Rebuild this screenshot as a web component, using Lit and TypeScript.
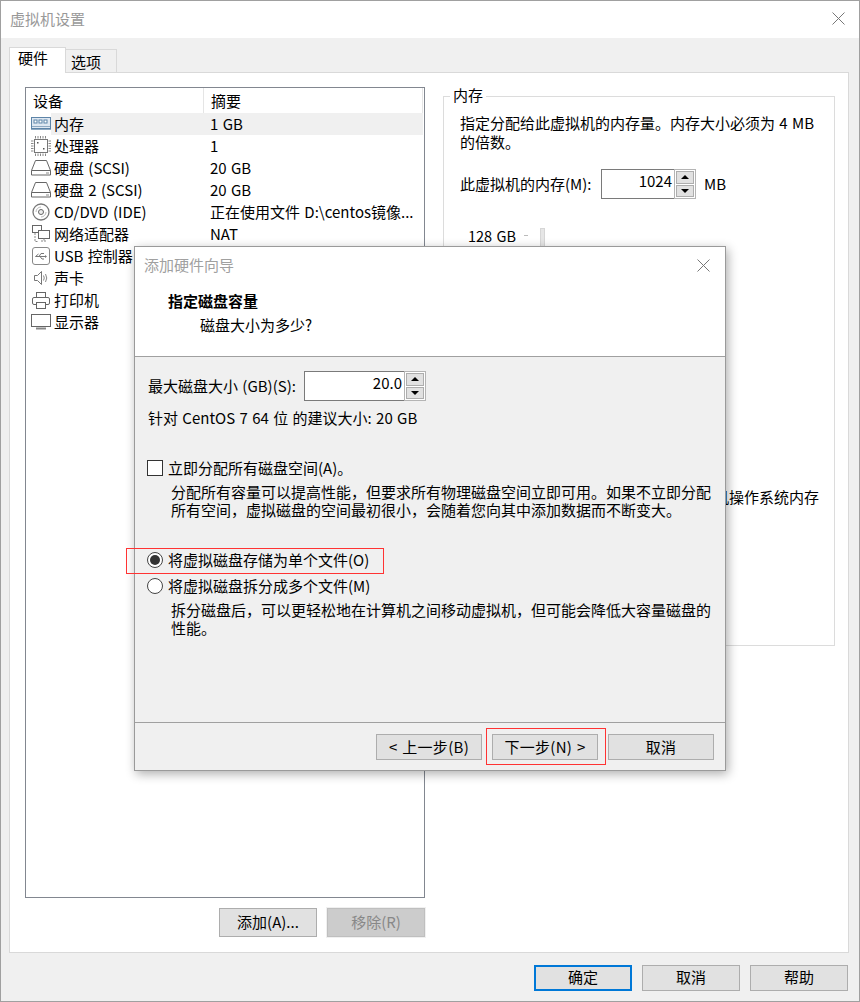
import { LitElement, html, css } from "lit";
import { customElement } from "lit/decorators.js";

const FONT = css`"Noto Sans CJK SC", "Noto Sans", sans-serif`;

const ic = {
  mem: html`<svg width="20" height="14" viewBox="0 0 20 14"><rect x=".5" y=".5" width="19" height="11" fill="#dfe8f2" stroke="#5d84a8"/><rect x="3" y="3" width="3" height="3" fill="#fff" stroke="#5d84a8"/><rect x="8" y="3" width="3" height="3" fill="#fff" stroke="#5d84a8"/><rect x="13" y="3" width="3" height="3" fill="#fff" stroke="#5d84a8"/><path d="M1 9.500h18M0 12.500h20" stroke="#8fa9c2"/></svg>`,
  cpu: html`<svg width="20" height="20" viewBox="0 0 20 20"><rect x="3.500" y="3.500" width="13" height="13" fill="#fff" stroke="#777"/><path d="M4.500 0v2.500M7 0v2.500M9.500 0v2.500M12 0v2.500M14.500 0v2.500M4.500 17.500v2.500M7 17.500v2.500M9.500 17.500v2.500M12 17.500v2.500M14.500 17.500v2.500M0 5h2.500M0 7.500h2.500M0 10h2.500M0 12.500h2.500M0 15h2.500M17.500 5h2.500M17.500 7.500h2.500M17.500 10h2.500M17.500 12.500h2.500M17.500 15h2.500" stroke="#888"/><rect x="6" y="6" width="1.500" height="1.500" fill="#555"/><rect x="12" y="12" width="1.500" height="1.500" fill="#555"/></svg>`,
  hdd: html`<svg width="20" height="16" viewBox="0 0 20 16"><path d="M4.500.5h11l4 10v4.500h-19v-4.500z" fill="#fff" stroke="#666"/><path d="M.5 10.500h19" stroke="#666"/><path d="M15 13h3" stroke="#888"/></svg>`,
  cd: html`<svg width="18" height="18" viewBox="0 0 18 18"><circle cx="9" cy="9" r="8" fill="#fff" stroke="#777" stroke-width="1.300"/><circle cx="9" cy="9" r="2.500" fill="#eee" stroke="#666"/><path d="M4 9a5 5 0 0 1 5-5M14 9a5 5 0 0 1-5 5" fill="none" stroke="#bbb"/></svg>`,
  net: html`<svg width="18" height="18" viewBox="0 0 18 18"><rect x=".5" y=".5" width="9" height="7" fill="#fff" stroke="#666"/><rect x="6.500" y="5.500" width="11" height="8" fill="#fff" stroke="#666"/><path d="M12 13.500v2M9 16h6M3 8v8.500h3" stroke="#888" fill="none" stroke-dasharray="2 1"/></svg>`,
  usb: html`<svg width="18" height="18" viewBox="0 0 18 18"><rect x=".5" y=".5" width="17" height="17" rx="2.500" fill="#fff" stroke="#888"/><path d="M3.500 9.500h10M3.500 9.500l3-2.500M7 9.500l2-3h3M8 9.500l2 2.500h2" fill="none" stroke="#777"/><path d="M13 8v3l2-1.500z" fill="#777"/></svg>`,
  snd: html`<svg width="16" height="16" viewBox="0 0 16 16"><path d="M1.500 5.500h3l4-4v13l-4-4h-3z" fill="#fff" stroke="#777"/><path d="M10.500 5.500q1.500 2.500 0 5M12.500 4q2.500 4 0 8" fill="none" stroke="#888"/></svg>`,
  prn: html`<svg width="18" height="17" viewBox="0 0 18 17"><rect x="4.500" y=".5" width="9" height="5" fill="#fff" stroke="#666"/><rect x=".5" y="5.500" width="17" height="7" rx="1.500" fill="#fff" stroke="#666"/><rect x="4.500" y="10.500" width="9" height="6" fill="#fff" stroke="#666"/></svg>`,
  mon: html`<svg width="20" height="16" viewBox="0 0 20 16"><rect x=".5" y=".5" width="19" height="12" fill="#fff" stroke="#666"/><path d="M5 14.500h10" stroke="#888" stroke-width="2"/></svg>`,
};

const devices = [
  [ic.mem, "内存", "1 GB"],
  [ic.cpu, "处理器", "1"],
  [ic.hdd, "硬盘 (SCSI)", "20 GB"],
  [ic.hdd, "硬盘 2 (SCSI)", "20 GB"],
  [ic.cd, "CD/DVD (IDE)", "正在使用文件 D:\\centos镜像..."],
  [ic.net, "网络适配器", "NAT"],
  [ic.usb, "USB 控制器", ""],
  [ic.snd, "声卡", ""],
  [ic.prn, "打印机", ""],
  [ic.mon, "显示器", ""],
] as const;

const closeX = html`<svg width="13" height="13" viewBox="0 0 13 13"><path d="M.5.5l12 12M12.500.5l-12 12" stroke="#777" fill="none"/></svg>`;

const spin = html`<span class="spin"><span class="up"></span><span class="dn"></span></span>`;

@customElement("app-root")
export class AppRoot extends LitElement {
  static styles = css`
    :host { display: block; width: 860px; height: 1002px; font-family: ${FONT}; font-size: 15px; word-spacing: 1px; color: #000; }
    * { box-sizing: border-box; }
    .win { position: relative; width: 860px; height: 1002px; background: #f0f0f0; border: 1px solid #a0a0a0; display: flex; flex-direction: column; overflow: hidden; }
    .tb { height: 37px; flex: none; background: #fff; display: flex; align-items: center; justify-content: space-between; padding: 0 14px 2px 9px; color: #999; }
    .tabs { height: 34px; flex: none; margin-left: 8px; display: flex; align-items: flex-end; }
    .tab { height: 23px; width: 51px; background: #f0f0f0; border: 1px solid #d9d9d9; border-left: 0; border-bottom: 0; padding-left: 5px; line-height: 24px; }
    .tab.on { height: 26px; width: 57px; background: #fff; border: 1px solid #d9d9d9; border-bottom: 0; padding-left: 8px; line-height: 20px; margin-bottom: -1px; position: relative; z-index: 1; }
    .pane { width: 840px; height: 881px; margin-left: 8px; background: #fff; border: 1px solid #d9d9d9; flex: none; display: grid; grid-template-columns: 400px 392px; column-gap: 18px; padding: 14px 0 0 15px; }
    .left { display: flex; flex-direction: column; }
    .list { height: 811px; border: 1px solid #828790; padding-right: 1px; display: flex; flex-direction: column; }
    .hd { display: grid; grid-template-columns: 178px 1fr; height: 25px; line-height: 25px; }
    .hd span { padding-left: 7px; border-right: 1px solid #e5e5e5; }
    .row { display: grid; grid-template-columns: 178px 1fr; height: 22px; line-height: 22px; }
    .row.sel .nm { background: linear-gradient(to right, transparent 25px, #f0f0f0 25px); }
    .row.sel .sm { background: #f0f0f0; }
    .nm { display: flex; align-items: center; gap: 3px; padding-left: 5px; white-space: nowrap; }
    .ico { width: 20px; height: 22px; display: flex; align-items: center; justify-content: center; flex: none; }
    .sm { padding-left: 6px; white-space: nowrap; overflow: hidden; }
    .lbtns { display: flex; justify-content: flex-end; gap: 10px; margin-top: 10px; }
    .btn { height: 29px; width: 98px; border: 1px solid #adadad; background: #e1e1e1; text-align: center; line-height: 26px; white-space: nowrap; }
    .btn.dis { background: #ccc; border-color: #bfbfbf; color: #888; outline: 1px solid #f0f0f0; }
    .btn.def { border: 2px solid #0078d7; }
    .grp { position: relative; height: 550px; margin-top: 9px; border: 1px solid #dcdcdc; padding: 16px 0 0 16px; }
    .grp .lg { position: absolute; left: 6px; top: -12px; background: #fff; padding: 0 3px; line-height: 20px; }
    .grp p { margin: 0; width: 365px; line-height: 19px; }
    .memrow { display: flex; align-items: center; margin-top: 18px; }
    .memrow > span:first-child { width: 141px; padding-bottom: 2px; white-space: nowrap; flex: none; }
    .field { display: flex; height: 30px; border: 1px solid #7a7a7a; border-right: 0; background: #fff; align-items: center; flex: none; }
    .field.m { width: 95px; }
    .field b { font-weight: 400; flex: 1; text-align: right; padding: 0 2px 6px 0; line-height: 20px; }
    .spin { width: 22px; height: 30px; margin: -1px 0; flex: none; display: flex; flex-direction: column; gap: 1px; padding: 1px; background: #fff; border: 1px solid #b4b4b4; }
    .spin span { flex: 1; background: #e1e1e1; border: 1px solid #adadad; position: relative; }
    .spin span::after { content: ""; position: absolute; left: 50%; top: 50%; transform: translate(-50%, -50%); border: 4px solid transparent; border-top: 0; border-bottom: 4px solid #000; }
    .spin .dn::after { border-bottom: 0; border-top: 4px solid #000; }
    .mb { margin-left: 8px; padding-bottom: 2px; }
    .ticks { display: flex; align-items: flex-start; margin: 29px 0 0 8px; font-size: 14.500px; line-height: 16px; }
    .ticks em { width: 4px; height: 1px; background: #bbb; margin: 7px 0 0 8px; }
    .ticks i { width: 5px; height: 30px; background: #e6e6e6; border: 1px solid #d6d6d6; margin-left: 12px; }
    .frag { margin: 229px 15px 0 0; line-height: 20px; text-align: right; white-space: nowrap; }
    .dlg { position: absolute; left: 133px; top: 245px; width: 592px; height: 525px; background: #f0f0f0; border: 1px solid #9a9a9a; box-shadow: 2px 3px 10px rgba(0,0,0,.32); display: flex; flex-direction: column; z-index: 5; }
    .dtop { height: 110px; flex: none; background: #fff; border-bottom: 1px solid #a0a0a0; }
    .dtitle { display: flex; justify-content: space-between; align-items: center; padding: 7px 15px 0 9px; color: #a0a0a0; line-height: 22px; }
    .dtop h1 { margin: 14px 0 0 33px; font-size: 15px; line-height: 22px; font-weight: 700; }
    .dtop h2 { margin: 2px 0 0 65px; font-size: 15px; line-height: 22px; font-weight: 400; }
    .dbody { flex: 1; padding: 14px 0 0 13px; }
    .szrow { display: flex; align-items: center; height: 30px; }
    .szrow > span:first-child { width: 156px; padding-bottom: 2px; white-space: nowrap; flex: none; }
    .szrow .field { width: 122px; }
    .rec { margin-top: 6px; line-height: 22px; white-space: nowrap; }
    .opt { display: flex; align-items: center; gap: 5px; height: 22px; margin-left: -1px; }
    .opt > span:nth-child(2) { padding-bottom: 2px; white-space: nowrap; }
    .box { width: 16px; height: 16px; border: 1px solid #333; background: #fff; flex: none; }
    .radio { width: 16px; height: 16px; border: 1px solid #444; border-radius: 50%; background: #fff; flex: none; display: flex; align-items: center; justify-content: center; }
    .radio.on::after { content: ""; width: 10px; height: 10px; border-radius: 50%; background: #333; }
    .desc { margin: 4px 0 0 23px; width: 545px; line-height: 18px; }
    .a { margin-top: 28px; }
    .b { margin-top: 30px; position: relative; }
    .c { margin-top: 4px; }
    .red1 { position: absolute; left: -21px; top: -1px; width: 258px; height: 26px; border: 1px solid #f33; pointer-events: none; }
    .dfoot { height: 48px; flex: none; border-top: 1px solid #a0a0a0; display: flex; justify-content: flex-end; align-items: flex-start; gap: 10px; padding: 11px 11px 0 0; }
    .dfoot .btn { width: 106px; height: 26px; line-height: 23px; letter-spacing: .3px; }
    .nx { position: relative; }
    .red2 { position: absolute; left: -7px; top: -7px; width: 120px; height: 37px; border: 1px solid #f33; pointer-events: none; }
    .foot { flex: 1; display: flex; justify-content: flex-end; align-items: center; gap: 10px; padding: 1px 11px 0 0; }
    .foot .btn { height: 26px; line-height: 22px; }
    .foot .def { line-height: 20px; }
  `;

  render() {
    return html`<div class="win">
      <div class="tb"><span>虚拟机设置</span>${closeX}</div>
      <div class="tabs"><div class="tab on">硬件</div><div class="tab">选项</div></div>
      <div class="pane">
        <div class="left">
          <div class="list">
            <div class="hd"><span>设备</span><span>摘要</span></div>
            ${devices.map((d, i) => html`<div class="row ${i === 0 ? "sel" : ""}">
              <div class="nm"><span class="ico">${d[0]}</span><span>${d[1]}</span></div>
              <div class="sm">${d[2]}</div>
            </div>`)}
          </div>
          <div class="lbtns"><div class="btn">添加(A)...</div><div class="btn dis">移除(R)</div></div>
        </div>
        <div class="grp">
          <span class="lg">内存</span>
          <p>指定分配给此虚拟机的内存量。内存大小必须为 4 MB 的倍数。</p>
          <div class="memrow"><span>此虚拟机的内存(M):</span>
            <div class="field m"><b>1024</b>${spin}</div>
            <span class="mb">MB</span></div>
          <div class="ticks"><span>128 GB</span><em></em><i></i></div>
          <div class="frag">机操作系统内存</div>
        </div>
      </div>
      <div class="foot">
        <div class="btn def">确定</div><div class="btn">取消</div><div class="btn">帮助</div>
      </div>
      <div class="dlg">
        <div class="dtop">
          <div class="dtitle"><span>添加硬件向导</span>${closeX}</div>
          <h1>指定磁盘容量</h1>
          <h2>磁盘大小为多少?</h2>
        </div>
        <div class="dbody">
          <div class="szrow"><span>最大磁盘大小 (GB)(S):</span><div class="field"><b>20.0</b>${spin}</div></div>
          <div class="rec">针对 CentOS 7 64 位 的建议大小: 20 GB</div>
          <div class="opt a"><span class="box"></span><span>立即分配所有磁盘空间(A)。</span></div>
          <div class="desc">分配所有容量可以提高性能，但要求所有物理磁盘空间立即可用。如果不立即分配所有空间，虚拟磁盘的空间最初很小，会随着您向其中添加数据而不断变大。</div>
          <div class="opt b"><span class="radio on"></span><span>将虚拟磁盘存储为单个文件(O)</span><span class="red1"></span></div>
          <div class="opt c"><span class="radio"></span><span>将虚拟磁盘拆分成多个文件(M)</span></div>
          <div class="desc">拆分磁盘后，可以更轻松地在计算机之间移动虚拟机，但可能会降低大容量磁盘的性能。</div>
        </div>
        <div class="dfoot">
          <div class="btn">&lt; 上一步(B)</div>
          <div class="btn nx">下一步(N) &gt;<span class="red2"></span></div>
          <div class="btn">取消</div>
        </div>
      </div>
    </div>`;
  }
}
